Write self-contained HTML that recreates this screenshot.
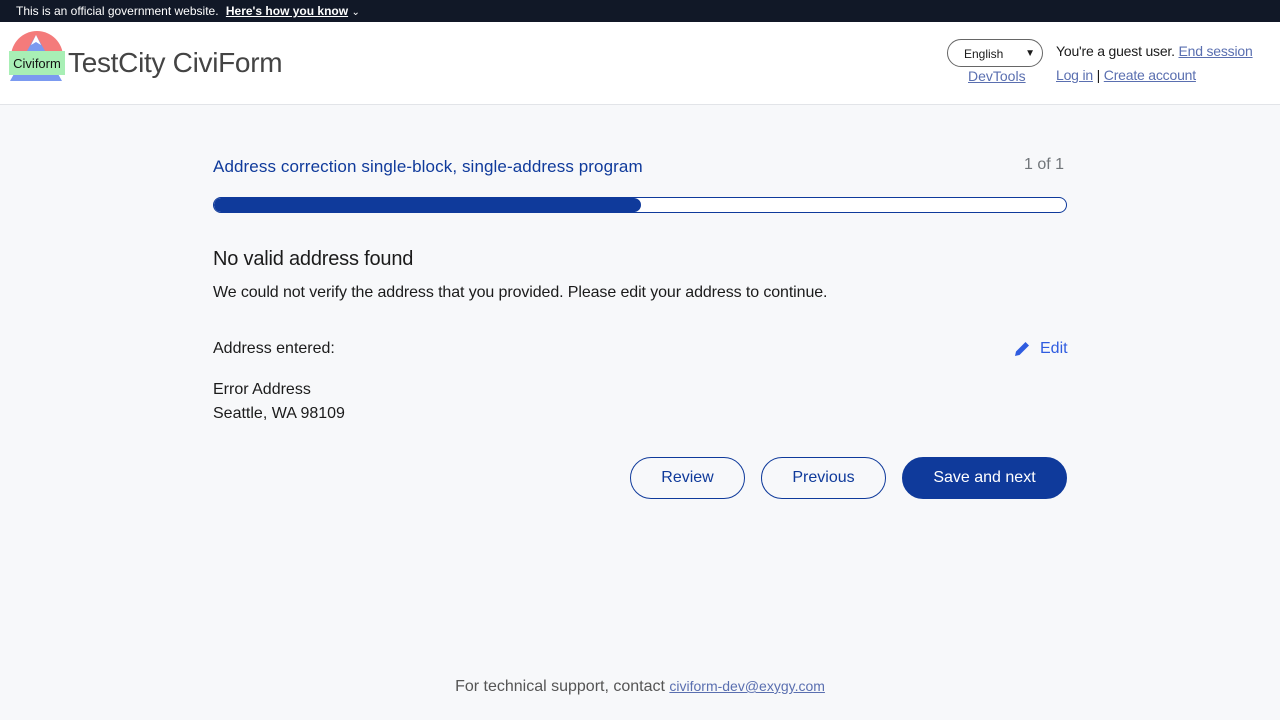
<!DOCTYPE html>
<html><head><style>
body{margin:0;width:1280px;height:720px;background:#f7f8fa;font-family:"Liberation Sans",sans-serif;position:relative;overflow:hidden;color:#1b1b1b}
a{color:#5a6fb0;text-decoration:underline}
.banner{height:22px;background:#111827;color:#fff;font-size:12px;line-height:22px;padding-left:16px}
.banner b{text-decoration:underline;margin-left:4px}
.hdr{position:absolute;top:22px;left:0;width:1280px;height:82px;background:#fff;border-bottom:1px solid #e2e4e8}
.abs{position:absolute}
.btn{position:absolute;top:457px;height:40px;border-radius:21px;border:1px solid #0f3a9b;color:#0f3a9b;font-size:16px;line-height:40px;text-align:center;box-sizing:content-box}
</style></head><body>
<div class="banner">This is an official government website. <b>Here's how you know</b> <span style="font-size:10px">⌄</span></div>
<div class="hdr">
<svg class="abs" style="left:8px;top:7px" width="58" height="52" viewBox="0 0 58 52">
<path d="M3 28 A26 26 0 0 1 55 28 Z" fill="#f47b7b"/>
<path d="M28 6 L54 52 L2 52 Z" fill="#7b9af0"/>
<path d="M28 6 L23 16 L28 13 L33 16 Z" fill="#fff"/>
<rect x="1" y="22" width="56" height="24" fill="#a8efb5"/>
<text x="29" y="39" font-size="13" text-anchor="middle" font-family="Liberation Sans" fill="#111">Civiform</text>
</svg>
<div class="abs" style="left:68px;top:25px;font-size:28px;color:#444;letter-spacing:-0.3px">TestCity CiviForm</div>
<div class="abs" style="left:947px;top:17px;width:96px;height:28px;border:1px solid #666;border-radius:14px;background:#fff;font-size:12px;line-height:28px;padding-left:16px;box-sizing:border-box">English<span style="position:absolute;right:7px;font-size:10px">▼</span></div>
<a class="abs" style="left:968px;top:46px;font-size:14px">DevTools</a>
<div class="abs" style="left:1056px;top:21px;font-size:14px;letter-spacing:-0.2px">You're a guest user. <a>End session</a></div>
<div class="abs" style="left:1056px;top:45px;font-size:14px;letter-spacing:-0.2px"><a>Log in</a> | <a>Create account</a></div>
</div>
<div class="abs" style="left:213px;top:157px;font-size:17px;color:#0f3a9b;letter-spacing:0.1px">Address correction single-block, single-address program</div>
<div class="abs" style="left:1024px;top:156px;font-size:16px;color:#71767a">1 of 1</div>
<div class="abs" style="left:213px;top:197px;width:852px;height:14px;border:1px solid #0f3a9b;border-radius:8px;background:#fff;overflow:hidden"><div style="width:427px;height:14px;background:#0f3a9b;border-radius:8px"></div></div>
<div class="abs" style="left:213px;top:248px;font-size:20px;letter-spacing:-0.2px">No valid address found</div>
<div class="abs" style="left:213px;top:284px;font-size:16px;letter-spacing:-0.1px">We could not verify the address that you provided. Please edit your address to continue.</div>
<div class="abs" style="left:213px;top:340px;font-size:16px">Address entered:</div>
<svg class="abs" style="left:1013px;top:340px" width="18" height="18" viewBox="0 0 18 18"><path d="M2 16 L3 11.5 L12.5 2 L16 5.5 L6.5 15 Z" fill="#2f5ce0"/></svg>
<div class="abs" style="left:1040px;top:340px;font-size:16px;color:#2f5ce0">Edit</div>
<div class="abs" style="left:213px;top:378px;font-size:16px;line-height:24px">Error Address<br>Seattle, WA 98109</div>
<div class="btn" style="left:630px;width:113px">Review</div>
<div class="btn" style="left:761px;width:123px">Previous</div>
<div class="btn" style="left:902px;width:163px;background:#0f3a9b;color:#fff">Save and next</div>
<div class="abs" style="left:0;width:1280px;top:678px;text-align:center;font-size:16px;color:#555">For technical support, contact <a style="font-size:14px">civiform-dev@exygy.com</a></div>
</body></html>
